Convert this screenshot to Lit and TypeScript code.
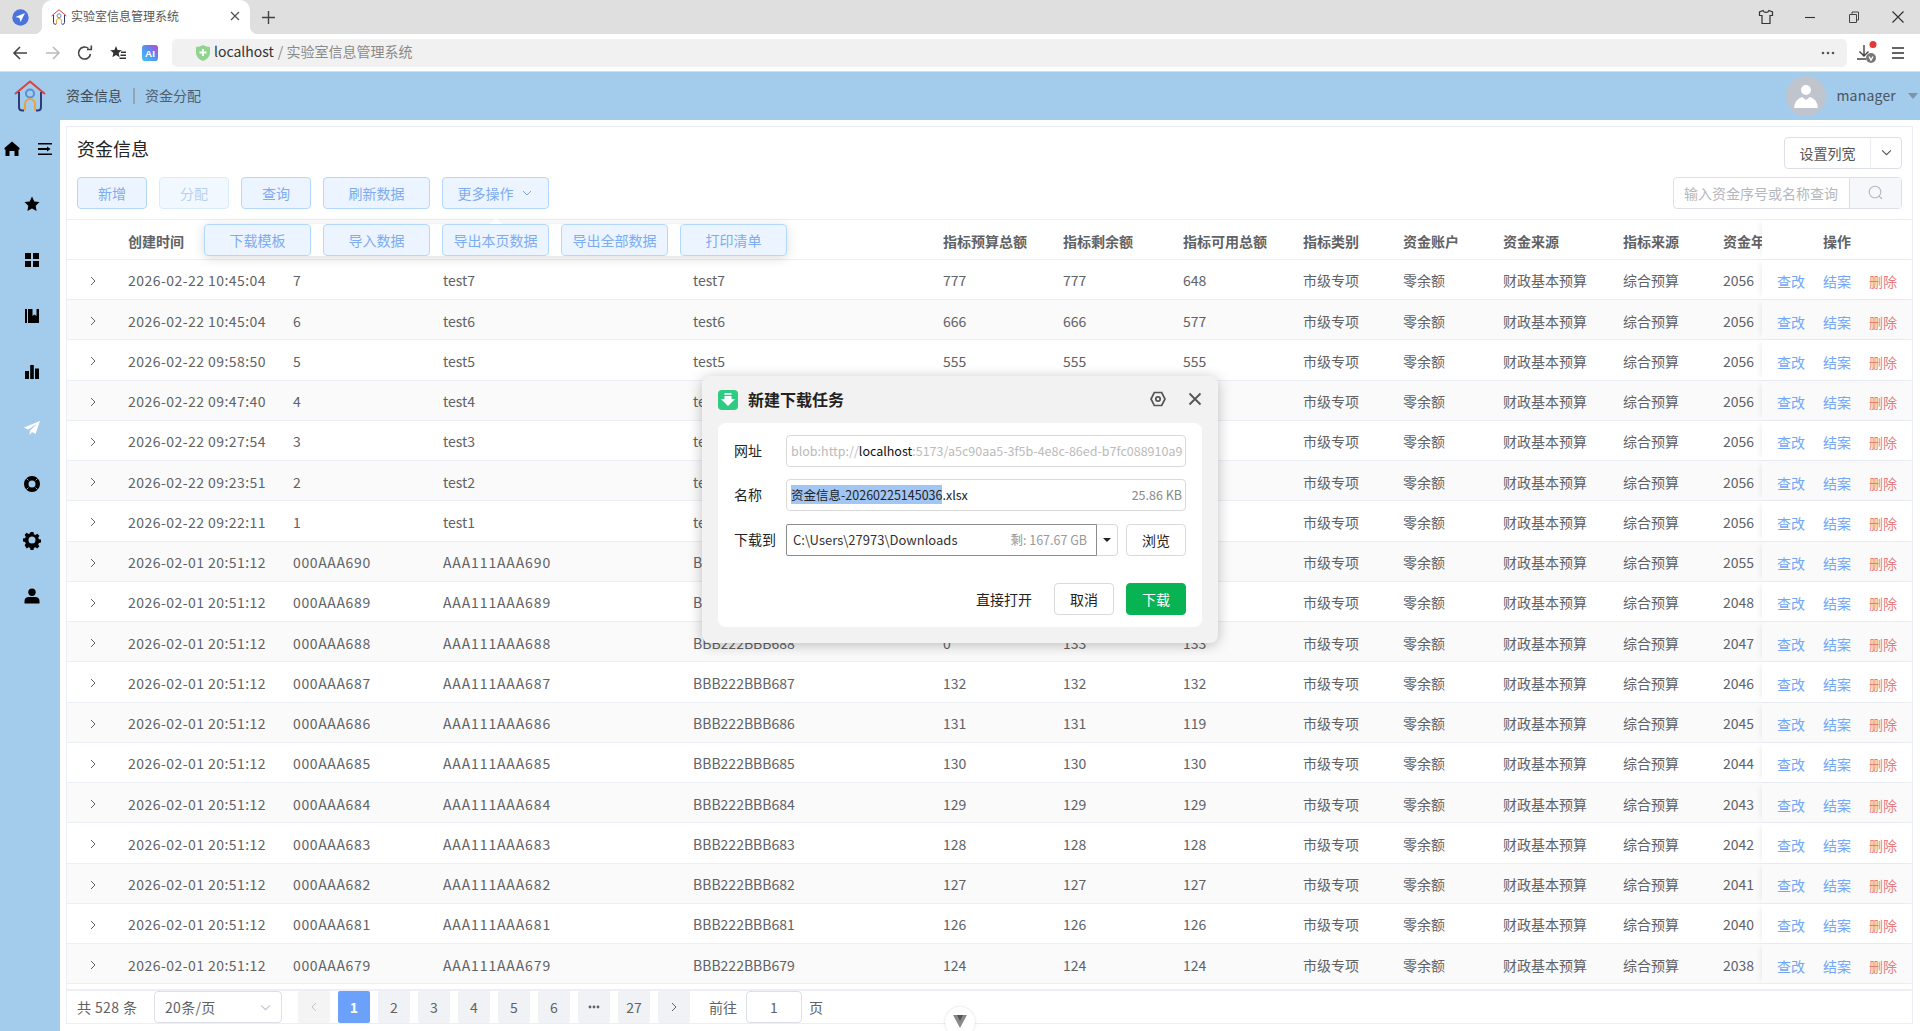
import { LitElement, html, css } from 'lit';
import { customElement } from 'lit/decorators.js';

// the first three headers sit behind the popover in the reference
const COLS = ['', '', '', '指标预算总额', '指标剩余额', '指标可用总额', '指标类别', '资金账户', '资金来源', '指标来源', '资金年度'];

// amounts behind the download dialog stay empty
const rows: string[][] = [
  ['2026-02-22 10:45:04', '7', 'test7', 'test7', '777', '777', '648', '2056'],
  ['2026-02-22 10:45:04', '6', 'test6', 'test6', '666', '666', '577', '2056'],
  ['2026-02-22 09:58:50', '5', 'test5', 'test5', '555', '555', '555', '2056'],
  ['2026-02-22 09:47:40', '4', 'test4', 'test4', '', '', '', '2056'],
  ['2026-02-22 09:27:54', '3', 'test3', 'test3', '', '', '', '2056'],
  ['2026-02-22 09:23:51', '2', 'test2', 'test2', '', '', '', '2056'],
  ['2026-02-22 09:22:11', '1', 'test1', 'test1', '', '', '', '2056'],
  ['2026-02-01 20:51:12', '000AAA690', 'AAA111AAA690', 'BBB222BBB690', '', '', '', '2055'],
  ['2026-02-01 20:51:12', '000AAA689', 'AAA111AAA689', 'BBB222BBB689', '', '', '', '2048'],
  ['2026-02-01 20:51:12', '000AAA688', 'AAA111AAA688', 'BBB222BBB688', '0', '133', '133', '2047'],
  ['2026-02-01 20:51:12', '000AAA687', 'AAA111AAA687', 'BBB222BBB687', '132', '132', '132', '2046'],
  ['2026-02-01 20:51:12', '000AAA686', 'AAA111AAA686', 'BBB222BBB686', '131', '131', '119', '2045'],
  ['2026-02-01 20:51:12', '000AAA685', 'AAA111AAA685', 'BBB222BBB685', '130', '130', '130', '2044'],
  ['2026-02-01 20:51:12', '000AAA684', 'AAA111AAA684', 'BBB222BBB684', '129', '129', '129', '2043'],
  ['2026-02-01 20:51:12', '000AAA683', 'AAA111AAA683', 'BBB222BBB683', '128', '128', '128', '2042'],
  ['2026-02-01 20:51:12', '000AAA682', 'AAA111AAA682', 'BBB222BBB682', '127', '127', '127', '2041'],
  ['2026-02-01 20:51:12', '000AAA681', 'AAA111AAA681', 'BBB222BBB681', '126', '126', '126', '2040'],
  ['2026-02-01 20:51:12', '000AAA679', 'AAA111AAA679', 'BBB222BBB679', '124', '124', '124', '2038'],
];

// latin runs in the reference font are wider than Noto's, so space them per kind of value
const cellClass = (v: string) => {
  if (v.startsWith('2026-')) return 'wide-date';
  if (v.startsWith('000')) return 'wide-id';
  if (v.startsWith('AAA')) return 'wide-name';
  return '';
};

const house = (size: number) => html`<svg width=${size} height=${size} viewBox="0 0 32 32" fill="none" stroke-width="2">
  <path d="M1 14L16 1.5L31 14" stroke="#d9433c" />
  <path d="M5 12V27q0 3.5 3.500 3.500H10M27 12V27q0 3.500-3.500 3.500H22" stroke="#2d3b78" />
  <circle cx="16" cy="13.500" r="4" stroke="#5b8fd0" />
  <path d="M11 30.500V24a5 5 0 0 1 10 0v6.500" stroke="#eba23c" />
</svg>`;

const navIcons = [
  html`<svg viewBox="0 0 16 16"><path d="M8 .5L15.500 7v1.500h-1V15h-4V10h-5v5h-4V8.500h-1V7z" /></svg>`,
  html`<svg viewBox="0 0 16 16"><path d="M8 .5l2.300 4.900 5.200.7-3.800 3.700.9 5.300L8 12.500l-4.600 2.600.9-5.300L.5 6.100l5.200-.7z" /></svg>`,
  html`<svg viewBox="0 0 16 16"><path d="M1 1h6v6H1zM9 1h6v6H9zM1 9h6v6H1zM9 9h6v6H9z" /></svg>`,
  html`<svg viewBox="0 0 16 16"><path d="M1 1h2v14H1zM4 1h4.500v7l2-1.500 2 1.500V1H15v14H4z" /></svg>`,
  html`<svg viewBox="0 0 16 16"><path d="M1 7h4v8H1zM6.200 1h3.600v14H6.200zM11 4.500h4V15h-4z" /></svg>`,
  html`<svg viewBox="0 0 16 16" style="fill:#fff"><path d="M16 1L0 7.500l4 2L13 4 6 10.500 5.500 15l2.500-3 3.500 2z" /></svg>`,
  html`<svg viewBox="0 0 16 16"><path fill-rule="evenodd" d="M8 0a8 8 0 1 1 0 16A8 8 0 0 1 8 0zm0 4.500a3.500 3.500 0 1 0 0 7 3.500 3.500 0 0 0 0-7z" /><path d="M2.400 2.400l2 2M13.600 2.400l-2 2M2.400 13.600l2-2M13.600 13.600l-2-2" stroke="#a3cbec" stroke-width=".8" /></svg>`,
  html`<svg viewBox="0 0 16 16"><path fill-rule="evenodd" d="M6.500 0h3l.4 2.200 1.500.7 1.900-1.200 2.100 2.100-1.200 1.900.7 1.500 2.100.3v3l-2.100.4-.7 1.500 1.200 1.900-2.100 2.100-1.900-1.200-1.500.7-.4 2.100h-3l-.4-2.100-1.500-.7-1.900 1.200L.6 13.300l1.200-1.900-.7-1.500L-1 9.500v-3l2.100-.3.700-1.500L.6 2.800 2.700.7l1.900 1.200 1.500-.7zM8 4.500a3.500 3.500 0 1 0 0 7 3.500 3.500 0 0 0 0-7z" /></svg>`,
  html`<svg viewBox="0 0 16 16"><circle cx="8" cy="4.200" r="3.700" /><path d="M0.500 15.500v-2.500c0-2.500 2-4 4-4h7c2 0 4 1.500 4 4v2.500z" /></svg>`,
];

const chevron = (w = 10) => html`<svg class="chev" width=${w} height=${w} viewBox="0 0 10 10" fill="none" stroke="currentColor" stroke-width="1"><path d="M1 3l4 4 4-4" /></svg>`;

@customElement('app-root')
export class AppRoot extends LitElement {
  static styles = css`
    :host {
      display: block;
      height: 1031px;
      overflow: hidden;
      position: relative;
      background: #fff;
      font-family: 'Noto Sans CJK SC', 'Noto Sans', sans-serif;
      font-size: 14px;
      color: #606266;
    }
    * { box-sizing: border-box; }

    /* browser frame */
    .tabstrip { height: 34px; background: #dfdfdf; display: flex; align-items: center; position: relative; }
    .ext { width: 42px; display: flex; justify-content: center; padding-right: 2px; }
    .tab {
      width: 208px; height: 34px; background: #fff; border-radius: 10px 10px 0 0;
      display: flex; align-items: center; padding-left: 9px; gap: 4px;
      font-size: 12px; color: #555; position: relative;
    }
    .tab .name { padding-bottom: 3px; }
    .tab::before, .tab::after { content: ''; position: absolute; bottom: 0; width: 8px; height: 8px; }
    .tab::before { left: -8px; background: radial-gradient(circle at 0 0, #dfdfdf 8px, #fff 8.500px); }
    .tab::after { right: -8px; background: radial-gradient(circle at 100% 0, #dfdfdf 8px, #fff 8.500px); }
    .tab .x { margin-left: auto; margin-right: 10px; display: flex; padding-bottom: 2px; }
    .newtab { margin-left: 12px; display: flex; }
    .winbtns { margin-left: auto; display: flex; gap: 28px; padding-right: 14px; align-items: center; }
    .toolbar { height: 38px; display: flex; align-items: center; border-bottom: 1px solid #d5dde5; padding-left: 12px; background: #fff; }
    .tools { display: flex; gap: 16.500px; align-items: center; width: 160px; }
    .addr {
      width: 1675px; height: 28px; background: #f1f1f1; border-radius: 5px;
      display: flex; align-items: center; padding-left: 24px; font-size: 14px; color: #333; gap: 4px;
    }
    .addr .host, .addr .rest { padding-bottom: 3px; }
    .addr .rest { color: #8a8a8a; }
    .addr .more { margin-left: auto; margin-right: 12px; display: flex; }
    .endtools { display: flex; gap: 13px; align-items: center; margin-left: 9px; }

    /* app header */
    .apphead { height: 48px; background: #a3cbec; display: flex; align-items: center; padding-left: 14px; }
    .crumbs { display: flex; align-items: center; margin-left: 20px; font-size: 14px; color: #3f4a55; padding-bottom: 2px; }
    .crumbs .sep { width: 2px; height: 16px; background: #8fa6ba; margin: 2px 10px 0 11px; }
    .crumbs .dim { color: #4f5f6e; }
    .user { margin-left: auto; display: flex; align-items: center; color: #4a5560; font-size: 14px; padding-right: 2px; }
    .user .who { letter-spacing: 0.2px; padding-bottom: 2px; }
    .avatar { width: 40px; height: 40px; border-radius: 50%; background: #c0c4cc; display: flex; align-items: center; justify-content: center; margin-right: 10px; }
    .caret { width: 0; height: 0; border: 5px solid transparent; border-top: 6px solid #7e93a6; border-bottom: 0; margin-left: 12px; }

    .main { display: flex; height: 911px; }
    .side { width: 60px; background: #a3cbec; flex: none; }
    .side-top { display: flex; justify-content: space-between; align-items: center; padding: 20px 7px 0 4px; height: 37px; }
    .side-list { display: flex; flex-direction: column; align-items: center; gap: 40px; padding-top: 39px; padding-left: 4px; }
    .side svg { width: 16px; height: 16px; display: block; fill: #000; overflow: visible; }

    /* panel */
    .panel {
      margin: 6px 7px 7px 6px; flex: 1; border: 1px solid #ebeef5; border-right: 1px solid #ebeef5;
      display: flex; flex-direction: column; position: relative; background: #fff; min-width: 0;
    }
    .titlebar { height: 52px; display: flex; align-items: flex-start; justify-content: space-between; padding: 10px 10px 0 10px; }
    .title { font-size: 18px; color: #222; line-height: 25px; margin-top: -1px; }
    .split { display: flex; height: 32px; width: 118px; border: 1px solid #dcdfe6; border-radius: 4px; color: #555; font-size: 14px; }
    .split span { flex: 1; display: flex; align-items: center; justify-content: center; padding-bottom: 1px; }
    .split .dd { flex: none; width: 31px; border-left: 1px solid #ebeef5; }
    .actions { display: flex; justify-content: space-between; padding: 0 10px; height: 32px; }
    .btns { display: flex; gap: 12px; }
    .btn {
      height: 32px; padding: 0 20px; background: #ecf5ff; border: 1px solid #b3d8ff; border-radius: 4px;
      color: #7dabf2; font-size: 14px; display: flex; align-items: center; justify-content: center; white-space: nowrap; gap: 6px;
    }
    .btn.w70 { width: 70px; }
    .btn.w107 { width: 107px; padding: 0; }
    .btn.more { gap: 8px; padding-right: 2px; }
    .btn.off { background: #f2f8ff; border-color: #d9ecff; color: #b6d1f5; }
    .pop .btn { padding-bottom: 1px; }
    .search { width: 229px; height: 32px; display: flex; border: 1px solid #dcdfe6; border-radius: 4px; color: #b4b7bd; font-size: 14px; }
    .search .ph { flex: 1; padding-left: 10px; display: flex; align-items: center; white-space: nowrap; }
    .search .go { width: 52px; background: #f5f7fa; border-left: 1px solid #dcdfe6; display: flex; align-items: center; justify-content: center; }

    /* table */
    .table { margin-top: 10px; border-top: 1px solid #ebeef5; }
    .row {
      display: grid; height: 40.250px; align-items: stretch; border-bottom: 1px solid #ebeef5;
      grid-template-columns: 49px 165px 150px 250px 250px 120px 120px 120px 100px 100px 120px 100px 51px 150px;
    }
    .row.head { height: 40px; font-weight: 700; }
    .row.alt { background: #fafafa; }
    .cell { padding: 2px 0 0 12px; display: flex; align-items: center; white-space: nowrap; overflow: hidden; }
    .head .cell { padding-top: 3px; }
    .cell.exp { padding: 3px 0 0 2px; justify-content: center; }
    .wide-date { letter-spacing: 0.450px; }
    .wide-id { letter-spacing: 0.650px; }
    .wide-name { letter-spacing: 0.900px; }
    .ops {
      padding: 4px 0 0 15px; display: flex; align-items: center; gap: 18px;
      background: #fff; box-shadow: -4px 0 6px -3px rgba(0, 0, 0, 0.08); position: relative;
    }
    .alt .ops { background: #fafafa; }
    .head .ops { justify-content: center; padding: 3px 0 0; }
    .link { color: #73a6f7; }
    .link.del { color: #e57d7d; }
    .tail { height: 7px; border-bottom: 2px solid #eeeef6; }

    /* pager */
    .pager { height: 32px; display: flex; align-items: center; padding-left: 10px; font-size: 14px; }
    .total { width: 77px; letter-spacing: 0.400px; flex: none; }
    .sel {
      width: 128px; height: 32px; border: 1px solid #dcdfe6; border-radius: 4px; margin-right: 16px;
      display: flex; align-items: center; justify-content: space-between; padding: 0 10px; color: #606266;
    }
    .sel span { letter-spacing: 0.300px; }
    .sel svg { color: #c0c4cc; }
    .pages { display: flex; gap: 8px; }
    .pg { width: 32px; height: 32px; background: #f0f2f5; display: flex; align-items: center; justify-content: center; border-radius: 2px; color: #606266; font-size: 14px; }
    .pg.on { background: #6ba1fb; color: #fff; font-weight: 700; }
    .pg.dis { background: #f4f4f5; color: #c0c4cc; }
    .goto { margin-left: 19px; display: flex; align-items: center; }
    .goto .in { width: 56px; height: 32px; border: 1px solid #dcdfe6; border-radius: 4px; display: flex; align-items: center; justify-content: center; margin: 0 7px 0 9px; }

    /* popover with the extra actions */
    .pop {
      position: absolute; left: 137px; top: 97px; display: flex; gap: 12px; background: #fff; border-radius: 4px;
      box-shadow: 0 2px 12px rgba(0, 0, 0, 0.14);
    }
    .pop::before {
      content: ''; position: absolute; left: 286px; top: -6px; border: 6px solid transparent;
      border-top: 0; border-bottom: 6px solid #fff;
    }

    /* download dialog */
    .dialog {
      position: absolute; left: 702px; top: 376px; width: 516px; height: 267px; background: #f2f2f2; border-radius: 8px;
      box-shadow: 0 2px 14px rgba(0, 0, 0, 0.25); padding: 0 16px; color: #222;
    }
    .dlg-head { height: 47px; display: flex; align-items: center; }
    .dlg-title { font-size: 16px; font-weight: 700; margin-left: 10px; color: #222; padding-bottom: 2px; }
    .dlg-gear { margin-left: auto; margin-right: 22px; display: flex; padding-bottom: 2px; }
    .dlg-close { display: flex; margin-right: 0; padding-bottom: 2px; }
    .card { background: #fff; border-radius: 8px; height: 204px; padding: 12px 16px 0 16px; }
    .frow { display: flex; align-items: center; height: 32px; margin-bottom: 12px; font-size: 14px; }
    .frow.third { margin-top: 13px; }
    .frow .lab { width: 52px; flex: none; color: #222; padding-bottom: 2px; }
    .field {
      flex: 1; height: 32px; border: 1px solid #dadada; border-radius: 4px; display: flex; align-items: center;
      padding: 0 3px 2px 4px; font-size: 12.500px; color: #bbb; white-space: nowrap; overflow: hidden; min-width: 0;
    }
    .field b { font-weight: 400; color: #111; }
    .field .hl { background: #a2c6f4; color: #222; }
    .field .ext-name { color: #222; }
    .field .size { margin-left: auto; color: #888; }
    .path {
      width: 311px; flex: none; height: 32px; border: 1px solid #8b8b8b; display: flex; align-items: center; padding: 0 9px 2px 6px;
      font-size: 13px; color: #333; white-space: nowrap; border-radius: 2px 0 0 2px;
    }
    .path .free { margin-left: auto; color: #999; font-size: 12.500px; }
    .drop { width: 21px; height: 32px; border: 1px solid #dadada; border-left: 0; border-radius: 0 4px 4px 0; display: flex; align-items: center; justify-content: center; }
    .tri { width: 0; height: 0; border: 4px solid transparent; border-top: 4px solid #222; border-bottom: 0; }
    .dbtn { height: 32px; width: 60px; border: 1px solid #dadada; border-radius: 4px; display: flex; align-items: center; justify-content: center; font-size: 14px; background: #fff; color: #222; flex: none; padding-bottom: 1px; }
    .frow .dbtn { margin-left: 8px; }
    .dfoot { display: flex; align-items: center; justify-content: flex-end; margin-top: 27px; gap: 12px; }
    .dbtn.flat { border: 0; width: 56px; margin-right: 10px; }
    .dbtn.go { background: #07b353; border-color: #07b353; color: #fff; }

    .devtool {
      position: absolute; left: 945px; top: 1007px; width: 30px; height: 30px; border-radius: 50%; background: #fff;
      box-shadow: 0 0 3px rgba(0, 0, 0, 0.15); display: flex; justify-content: center; padding-top: 8px;
    }
  `;

  render() {
    return html`
      <div class="tabstrip">
        <div class="ext">
          <svg width="17" height="17" viewBox="0 0 17 17"><circle cx="8.500" cy="8.500" r="8.200" fill="#4a74dc" /><path d="M13 4L3.500 8l4 1 1 4z" fill="#fff" /></svg>
        </div>
        <div class="tab">
          ${house(16)}
          <span class="name">实验室信息管理系统</span>
          <span class="x"><svg width="10" height="10" viewBox="0 0 10 10" stroke="#555" stroke-width="1.300"><path d="M1 1l8 8M9 1l-8 8" /></svg></span>
        </div>
        <span class="newtab"><svg width="13" height="13" viewBox="0 0 13 13" stroke="#444" stroke-width="1.400"><path d="M6.500 0v13M0 6.500h13" /></svg></span>
        <div class="winbtns">
          <svg width="16" height="16" viewBox="0 0 16 16" fill="none" stroke="#333" stroke-width="1.200"><path d="M5 1.500L1.500 3v3.500H4V14.500h8V6.500h2.500V3L11 1.500C10 4 6 4 5 1.500z" /></svg>
          <svg width="16" height="16" viewBox="0 0 16 16" stroke="#333" stroke-width="1.100"><path d="M3 8.500h10" /></svg>
          <svg width="16" height="16" viewBox="0 0 16 16" fill="none" stroke="#444" stroke-width="1"><path d="M3.500 5.500h7v8h-7zM6 5.500V3h6.500v8h-2" /></svg>
          <svg width="16" height="16" viewBox="0 0 16 16" stroke="#333" stroke-width="1.200"><path d="M2.500 2.500l11 11M13.500 2.500l-11 11" /></svg>
        </div>
      </div>
      <div class="toolbar">
        <div class="tools">
          <svg width="16" height="16" viewBox="0 0 16 16" fill="none" stroke="#444" stroke-width="1.600"><path d="M15 8H2M8 2L2 8l6 6" /></svg>
          <svg width="16" height="16" viewBox="0 0 16 16" fill="none" stroke="#bbb" stroke-width="1.600"><path d="M1 8h13M8 2l6 6-6 6" /></svg>
          <svg width="16" height="16" viewBox="0 0 16 16" fill="none" stroke="#444" stroke-width="1.600"><path d="M13.500 9a6 6 0 1 1-2-5.500" /><path d="M10 4.500h4.300V.5" fill="none" /></svg>
          <svg width="16" height="16" viewBox="0 0 16 16" fill="#333"><path d="M6 1l1.600 4 4.200.3-3.200 2.800 1 4.100L6 10 2.400 12.200l1-4.100L.2 5.300 4.400 5z" /><path d="M11 6.500h5V8h-5zM10.500 9.500H16V11h-5.500zM9.500 12.500H16V14H9.500z" /></svg>
          <svg width="16" height="16" viewBox="0 0 18 18"><defs><linearGradient id="ai" x1="0" y1="1" x2="1" y2="0"><stop offset="0" stop-color="#3fc7f0" /><stop offset=".55" stop-color="#5a8cf0" /><stop offset="1" stop-color="#c13fd8" /></linearGradient></defs><rect width="18" height="18" rx="3.500" fill="url(#ai)" /><text x="9" y="13.500" font-size="11" font-weight="700" fill="#fff" text-anchor="middle" font-family="Liberation Sans">AI</text></svg>
        </div>
        <div class="addr">
          <svg width="14" height="16" viewBox="0 0 14 16"><path d="M0 2q4 0 7-2 3 2 7 2v6q0 5-7 8-7-3-7-8z" fill="#8fd48f" /><path d="M7 4v7M3.500 7.500h7" stroke="#fff" stroke-width="2" /></svg>
          <span class="host">localhost</span>
          <span class="rest">/ 实验室信息管理系统</span>
          <span class="more"><svg width="14" height="4" viewBox="0 0 14 4" fill="#555"><circle cx="2" cy="2" r="1.300" /><circle cx="7" cy="2" r="1.300" /><circle cx="12" cy="2" r="1.300" /></svg></span>
        </div>
        <div class="endtools">
          <svg width="22" height="24" viewBox="0 0 22 24" fill="none" stroke="#444" stroke-width="1.400"><path d="M8 4v11M3.500 10.500L8 15l4.500-4.500M1 18h9" /><circle cx="15" cy="17" r="5" fill="#777" stroke="none" /><path d="M13 15.500l2 3.500 2-3.500" stroke="#fff" /><circle cx="17" cy="3.500" r="3.500" fill="#e53935" stroke="none" /></svg>
          <svg width="14" height="14" viewBox="0 0 14 14" stroke="#333" stroke-width="1.700"><path d="M1 2h12M1 7h12M1 12h12" /></svg>
        </div>
      </div>

      <div class="apphead">
        ${house(32)}
        <div class="crumbs"><span>资金信息</span><span class="sep"></span><span class="dim">资金分配</span></div>
        <div class="user">
          <span class="avatar"><svg width="24" height="26" viewBox="0 0 24 26" fill="#fff"><circle cx="12" cy="7" r="5" /><path d="M0 25q1-9 8-11l4 3 4-3q7 2 8 11z" /></svg></span>
          <span class="who">manager</span>
          <span class="caret"></span>
        </div>
      </div>

      <div class="main">
        <div class="side">
          <div class="side-top">
            ${navIcons[0]}
            <svg viewBox="0 0 16 16"><path d="M1 2h14v1.600H1zM1 7h9V5.500l3.500 2.500L10 10.500V9H1zM1 12.400h14V14H1z" /></svg>
          </div>
          <div class="side-list">${navIcons.slice(1).map((i) => i)}</div>
        </div>

        <div class="panel">
          <div class="titlebar">
            <div class="title">资金信息</div>
            <div class="split"><span>设置列宽</span><span class="dd">${chevron(11)}</span></div>
          </div>
          <div class="actions">
            <div class="btns">
              <div class="btn w70">新增</div>
              <div class="btn w70 off">分配</div>
              <div class="btn w70">查询</div>
              <div class="btn w107">刷新数据</div>
              <div class="btn w107 more">更多操作 ${chevron(10)}</div>
            </div>
            <div class="search">
              <div class="ph">输入资金序号或名称查询</div>
              <div class="go"><svg width="15" height="15" viewBox="0 0 15 15" fill="none" stroke="#b4b7bd" stroke-width="1.100"><circle cx="7" cy="7" r="5.800" /><path d="M11 11l3 3" /></svg></div>
            </div>
          </div>

          <div class="table">
            <div class="row head">
              <div class="cell"></div>
              <div class="cell">创建时间</div>
              ${COLS.map((c) => html`<div class="cell">${c}</div>`)}
              <div class="ops">操作</div>
            </div>
            ${rows.map((r, i) => html`
              <div class="row ${i % 2 ? 'alt' : ''}">
                <div class="cell exp"><svg width="8" height="10" viewBox="0 0 8 10" fill="none" stroke="#606266" stroke-width="1"><path d="M2 1l4 4-4 4" /></svg></div>
                ${r.slice(0, 7).map((v) => html`<div class="cell ${cellClass(v)}">${v}</div>`)}
                <div class="cell">市级专项</div>
                <div class="cell">零余额</div>
                <div class="cell">财政基本预算</div>
                <div class="cell">综合预算</div>
                <div class="cell">${r[7]}</div>
                <div class="ops"><span class="link">查改</span><span class="link">结案</span><span class="link del">删除</span></div>
              </div>`)}
          </div>
          <div class="tail"></div>

          <div class="pager">
            <span class="total">共 528 条</span>
            <div class="sel"><span>20条/页</span>${chevron(11)}</div>
            <div class="pages">
              <div class="pg dis"><svg width="8" height="10" viewBox="0 0 8 10" fill="none" stroke="currentColor"><path d="M6 1L2 5l4 4" /></svg></div>
              <div class="pg on">1</div>
              ${['2', '3', '4', '5', '6'].map((p) => html`<div class="pg">${p}</div>`)}
              <div class="pg"><svg width="12" height="4" viewBox="0 0 12 4" fill="#606266"><circle cx="2" cy="2" r="1.400" /><circle cx="6" cy="2" r="1.400" /><circle cx="10" cy="2" r="1.400" /></svg></div>
              <div class="pg">27</div>
              <div class="pg"><svg width="8" height="10" viewBox="0 0 8 10" fill="none" stroke="currentColor"><path d="M2 1l4 4-4 4" /></svg></div>
            </div>
            <div class="goto"><span>前往</span><div class="in">1</div><span>页</span></div>
          </div>

          <div class="pop">
            ${['下载模板', '导入数据', '导出本页数据', '导出全部数据', '打印清单'].map((b) => html`<div class="btn w107">${b}</div>`)}
          </div>
        </div>
      </div>

      <div class="dialog">
        <div class="dlg-head">
          <svg width="20" height="20" viewBox="0 0 20 20"><rect width="20" height="20" rx="4" fill="#2fcb83" /><path d="M6.500 3h7v1.800h-7zM6.500 6h7v3H17l-7 7-7-7h3.500z" fill="#fff" /></svg>
          <span class="dlg-title">新建下载任务</span>
          <span class="dlg-gear"><svg width="16" height="16" viewBox="0 0 16 16" fill="none" stroke="#555" stroke-width="1.700"><path d="M4.300 1.500h7.400L15 8l-3.300 6.500H4.300L1 8z" /><circle cx="8" cy="8" r="2.200" /></svg></span>
          <span class="dlg-close"><svg width="14" height="14" viewBox="0 0 14 14" stroke="#555" stroke-width="1.800"><path d="M1.500 1.500l11 11M12.500 1.500l-11 11" /></svg></span>
        </div>
        <div class="card">
          <div class="frow">
            <span class="lab">网址</span>
            <div class="field">blob:http://<b>localhost</b>:5173/a5c90aa5-3f5b-4e8c-86ed-b7fc088910a9</div>
          </div>
          <div class="frow">
            <span class="lab">名称</span>
            <div class="field"><span class="hl">资金信息-20260225145036</span><span class="ext-name">.xlsx</span><span class="size">25.86 KB</span></div>
          </div>
          <div class="frow third">
            <span class="lab">下载到</span>
            <div class="path"><span>C:\\Users\\27973\\Downloads</span><span class="free">剩: 167.67 GB</span></div>
            <div class="drop"><span class="tri"></span></div>
            <div class="dbtn">浏览</div>
          </div>
          <div class="dfoot">
            <div class="dbtn flat">直接打开</div>
            <div class="dbtn">取消</div>
            <div class="dbtn go">下载</div>
          </div>
        </div>
      </div>

      <div class="devtool"><svg width="14" height="13" viewBox="0 0 14 13"><path d="M0 0h14L7 13z" fill="#8a8a8a" /><path d="M4 0h6L7 6z" fill="#555" /></svg></div>
    `;
  }
}
